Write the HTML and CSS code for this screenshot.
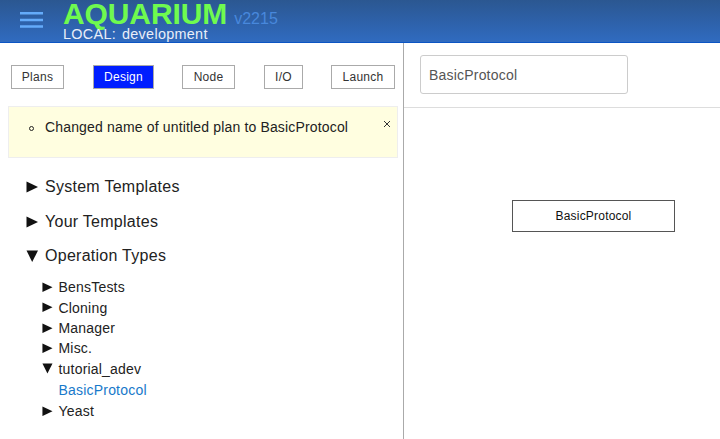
FILE: index.html
```html
<!DOCTYPE html>
<html lang="en">
<head>
<meta charset="utf-8">
<title>Aquarium</title>
<link rel="stylesheet" href="styles.css">
</head>
<body>
<header class="topbar">
  <svg class="menu" width="24" height="18" viewBox="0 0 24 18"><path d="M0 2.3h23M0 9h23M0 15.5h23" stroke="#64abfa" stroke-width="2.6"/></svg>
  <div class="brand">
    <div class="title"><span class="name">AQUARIUM</span><span class="version">v2215</span></div>
    <div class="env"><span>LOCAL:</span><span>development</span></div>
  </div>
</header>
<main class="columns">
  <section class="sidebar">
    <nav class="tabs">
      <button class="tab plans">Plans</button>
      <button class="tab design active">Design</button>
      <button class="tab node-tab">Node</button>
      <button class="tab io">I/O</button>
      <button class="tab launch">Launch</button>
    </nav>
    <div class="notice">
      <span class="bullet"></span>
      <span class="message">Changed name of untitled plan to BasicProtocol</span>
      <svg class="close" width="8" height="8" viewBox="0 0 8 8"><path d="M1 1l6 6M7 1l-6 6" stroke="#333" stroke-width="1"/></svg>
    </div>
    <ul class="groups">
      <li><svg class="arrow" viewBox="0 0 12 12"><path d="M.5.5L12 6 .5 11.5z"/></svg><span class="g1">System Templates</span></li>
      <li><svg class="arrow" viewBox="0 0 12 12"><path d="M.5.5L12 6 .5 11.5z"/></svg><span class="g2">Your Templates</span></li>
      <li><svg class="arrow" viewBox="0 0 12 12"><path d="M.5.5h11.5L6.2 12z"/></svg><span class="g3">Operation Types</span></li>
    </ul>
    <ul class="types">
      <li><svg class="arrow" viewBox="0 0 12 12"><path d="M.5.5L12 6 .5 11.5z"/></svg><span>BensTests</span></li>
      <li><svg class="arrow" viewBox="0 0 12 12"><path d="M.5.5L12 6 .5 11.5z"/></svg><span>Cloning</span></li>
      <li><svg class="arrow" viewBox="0 0 12 12"><path d="M.5.5L12 6 .5 11.5z"/></svg><span>Manager</span></li>
      <li><svg class="arrow" viewBox="0 0 12 12"><path d="M.5.5L12 6 .5 11.5z"/></svg><span>Misc.</span></li>
      <li><svg class="arrow" viewBox="0 0 12 12"><path d="M.5.5h11.5L6.2 12z"/></svg><span>tutorial_adev</span></li>
      <li class="leaf"><a>BasicProtocol</a></li>
      <li><svg class="arrow" viewBox="0 0 12 12"><path d="M.5.5L12 6 .5 11.5z"/></svg><span>Yeast</span></li>
    </ul>
  </section>
  <section class="editor">
    <div class="plan-bar"><input class="plan-name" value="BasicProtocol"></div>
    <div class="canvas"><div class="operation">BasicProtocol</div></div>
  </section>
</main>
</body>
</html>
```

FILE: styles.css
```css
* { box-sizing: border-box; }
body { margin: 0; width: 720px; height: 439px; overflow: hidden; background: #fff; color: #222; font-family: "Liberation Sans", Arial, sans-serif; }
ul { list-style: none; margin: 0; padding: 0; }
.topbar { height: 43px; display: flex; background: linear-gradient(#2b5791, #306bc0); border-bottom: 1px solid #0b55c4; }
.menu { margin: 11px 0 0 20px; }
.brand { margin-left: 19px; white-space: nowrap; }
.title { height: 27px; display: flex; align-items: baseline; line-height: 28px; }
.name { font-size: 30px; font-weight: bold; letter-spacing: -.1px; color: #6ffa4f; }
.version { margin-left: 7px; font-size: 16px; color: #4888dc; }
.env { display: flex; gap: 6px; font-size: 14.4px; line-height: 15px; letter-spacing: .3px; color: #e9eef8; }
.columns { display: flex; height: 396px; }
.sidebar { width: 404px; border-right: 1px solid #aaa; }
.tabs { display: flex; margin: 22px 0 0 11px; height: 24px; }
.tab { height: 24px; padding: 0; border: 1px solid #aaa; background: #fff; color: #333; font: 12px "Liberation Sans", Arial, sans-serif; letter-spacing: .25px; }
.tab.active { background: #001eff; color: #fff; }
.plans { width: 53px; }
.design { width: 61px; margin-left: 29px; }
.node-tab { width: 53px; margin-left: 28px; }
.io { width: 39px; margin-left: 29px; }
.launch { width: 64px; margin-left: 28px; }
.notice { display: flex; margin: 17px 0 0 8px; width: 390px; height: 52px; border: 1px solid #eee; background: #fffee0; }
.bullet { width: 5px; height: 5px; margin: 19px 0 0 20px; border: 1px solid #222; border-radius: 50%; }
.message { flex: 1; margin-left: 11px; font-size: 14px; line-height: 41px; letter-spacing: .16px; white-space: nowrap; }
.close { margin: 13px 6px 0 0; }
.groups { margin: 12px 0 0 26px; letter-spacing: .27px; }
.groups li { display: flex; align-items: center; height: 34.4px; font-size: 16px; }
.groups .arrow { width: 12px; height: 12px; margin-right: 7px; }
.arrow { flex: none; fill: #111; }
.types { margin: 4px 0 0 42px; font-size: 14px; letter-spacing: .2px; }
.types li { display: flex; align-items: center; height: 20.3px; }
.types .arrow { width: 10.5px; height: 10.5px; margin-right: 6px; }
.types .leaf { height: 22px; padding-left: 16.5px; color: #1779ca; }
.editor { flex: 1; }
.plan-bar { height: 65px; padding: 12px 0 0 16px; border-bottom: 1px solid #ddd; }
.plan-name { width: 208px; height: 39px; padding: 0 8px; border: 1px solid #ccc; border-radius: 3px; color: #555; font: 14px "Liberation Sans", Arial, sans-serif; letter-spacing: .2px; }
.operation { margin: 92px 0 0 108px; width: 163px; height: 32px; border: 1px solid #555; font-size: 12px; line-height: 31px; letter-spacing: .2px; text-align: center; color: #111; }
.canvas { display: flex; }
```
